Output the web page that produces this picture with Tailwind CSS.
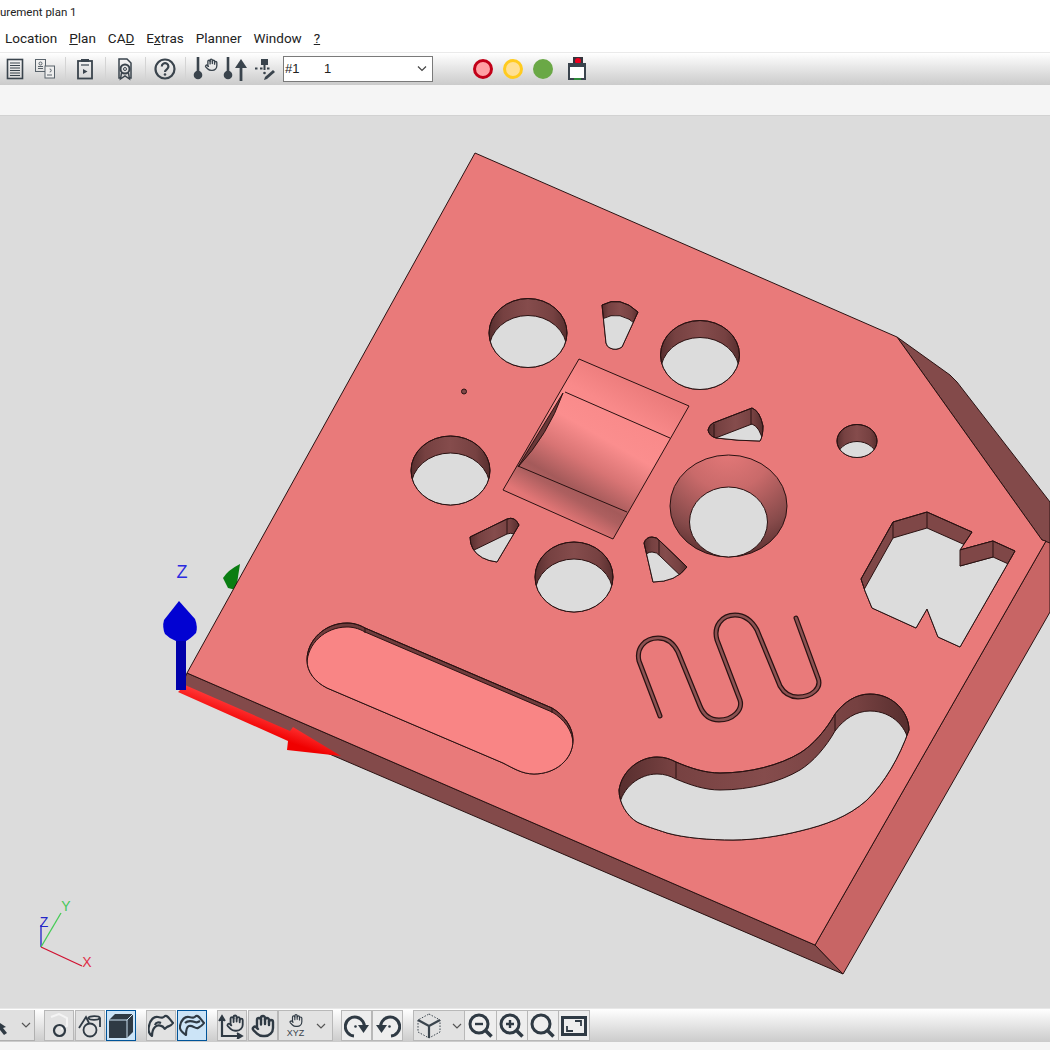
<!doctype html>
<html>
<head>
<meta charset="utf-8">
<script src="https://cdn.jsdelivr.net/npm/@tailwindcss/browser@4"></script>
</head>
<body class="bg-white overflow-hidden">
<div class="w-[1050px] h-[1050px] flex flex-col font-['Roboto',sans-serif] text-[#222] overflow-hidden">

  <!-- title -->
  <div class="h-[25px] shrink-0 bg-white whitespace-nowrap text-[11.5px] leading-[24px]">urement plan 1</div>

  <!-- menu -->
  <div class="h-[28px] shrink-0 bg-white border-b border-[#eaeaea] flex items-center gap-3 pl-[5px] text-[13.5px]">
    <span>Location</span>
    <span><u>P</u>lan</span>
    <span>CA<u>D</u></span>
    <span>E<u>x</u>tras</span>
    <span>Planner</span>
    <span>Window</span>
    <span><u>?</u></span>
  </div>

  <!-- main toolbar -->
  <div class="h-[32px] shrink-0 bg-gradient-to-b from-white to-[#cbcbcb] flex items-center">
    <div class="w-[30px] h-[32px] flex items-center justify-center">
      <svg width="18" height="22" viewBox="0 0 18 22" fill="none" stroke="#3a444d"><rect x="1.5" y="1.5" width="15" height="19" stroke-width="1.6"/><path d="M4 5h10M4 7.5h10M4 10h10M4 12.500h10M4 15h10M4 17.500h10" stroke-width="1.200"/></svg>
    </div>
    <div class="w-[30px] h-[32px] flex items-center justify-center">
      <svg width="22" height="22" viewBox="0 0 22 22" fill="none" stroke="#59636b"><rect x="1.500" y="1.500" width="10" height="12"/><rect x="11" y="8" width="9.500" height="12" fill="#eee"/><circle cx="6.500" cy="5.500" r="1.500"/><path d="M4 10.500h5M4 8.500h5M15.700 11a1.500 1.500 0 1 1 0 3M13 17h5"/></svg>
    </div>
    <div class="w-[10px] h-[24px] flex justify-center"><div class="w-px h-full bg-[#d4d4d4]"></div></div>
    <div class="w-[30px] h-[32px] flex items-center justify-center">
      <svg width="18" height="22" viewBox="0 0 18 22" fill="none" stroke="#3a444d"><rect x="2" y="3" width="14" height="17.500" stroke-width="1.800"/><rect x="5" y="1" width="8" height="3" fill="#3a444d" stroke="none"/><path d="M5 7h8" stroke-width="1.200"/><path d="M7 11l4.500 2.500L7 16z" fill="#3a444d" stroke="none"/></svg>
    </div>
    <div class="w-[10px] h-[24px] flex justify-center"><div class="w-px h-full bg-[#d4d4d4]"></div></div>
    <div class="w-[30px] h-[32px] flex items-center justify-center">
      <svg width="18" height="24" viewBox="0 0 18 24" fill="none" stroke="#3a444d"><path d="M5 21H3V2h8l4 4v15h-2" stroke-width="1.500"/><circle cx="9" cy="12" r="4.500" stroke-width="2"/><circle cx="9" cy="12" r="1.500" stroke-width="1"/><path d="M5.500 16l-1 6 4.500-3 4.500 3-1-6" stroke-width="1.500"/></svg>
    </div>
    <div class="w-[10px] h-[24px] flex justify-center"><div class="w-px h-full bg-[#d4d4d4]"></div></div>
    <div class="w-[30px] h-[32px] flex items-center justify-center">
      <svg width="22" height="22" viewBox="0 0 22 22" fill="none" stroke="#3a444d"><circle cx="11" cy="11" r="9.500" stroke-width="2.200"/><path d="M7.800 8.500a3.300 3.300 0 1 1 5.200 2.700c-1.300 1-2 1.300-2 2.800" stroke-width="2.200"/><circle cx="11" cy="16.500" r="1.300" fill="#3a444d" stroke="none"/></svg>
    </div>
    <div class="w-[10px] h-[24px] flex justify-center"><div class="w-px h-full bg-[#d4d4d4]"></div></div>
    <div class="w-[30px] h-[32px] flex items-center justify-center">
      <svg width="26" height="24" viewBox="0 0 26 24" fill="none" stroke="#3a444d"><path d="M6 0v17" stroke-width="2.600"/><circle cx="6" cy="18" r="4.300" fill="#3a444d" stroke="none"/><g transform="translate(12.500 1) scale(.56)" stroke-width="2.400" stroke-linecap="round" stroke-linejoin="round"><path d="M18 11V6a2 2 0 0 0-2-2a2 2 0 0 0-2 2"/><path d="M14 10V4a2 2 0 0 0-2-2a2 2 0 0 0-2 2v2"/><path d="M10 10.500V6a2 2 0 0 0-2-2a2 2 0 0 0-2 2v8"/><path d="M18 8a2 2 0 1 1 4 0v6a8 8 0 0 1-8 8h-2c-2.800 0-4.500-.86-5.990-2.340l-3.600-3.600a2 2 0 0 1 2.830-2.820L7 15"/></g></svg>
    </div>
    <div class="w-[30px] h-[32px] flex items-center justify-center">
      <svg width="26" height="26" viewBox="0 0 26 26" fill="none" stroke="#3a444d"><path d="M6 1v17" stroke-width="2.600"/><circle cx="6" cy="19" r="4.300" fill="#3a444d" stroke="none"/><path d="M19 11v14" stroke-width="2.800"/><path d="M19 3l6 9H13z" fill="#3a444d" stroke="none"/></svg>
    </div>
    <div class="w-[30px] h-[32px] flex items-center justify-center">
      <svg width="22" height="22" viewBox="0 0 22 22" fill="#3a444d" stroke="none"><rect x="7" y="1" width="7" height="6"/><rect x="9.500" y="7" width="2" height="5"/><rect x="1" y="9.500" width="2.500" height="2"/><rect x="6" y="9.500" width="2.500" height="2"/><rect x="13" y="9.500" width="2.500" height="2"/><circle cx="10.500" cy="15" r="1.300"/><path d="M11 19l8-7 2 2-8 7-3 1z"/></svg>
    </div>
    <div class="ml-[3px] w-[150px] h-[26px] border border-[#7a7a7a] bg-white flex items-center text-[13px] relative">
      <span class="w-[40px] pl-[1px] font-['Liberation_Sans',sans-serif]">#1</span>
      <span class="font-['Liberation_Sans',sans-serif]">1</span>
      <svg class="ml-auto mr-[3px]" width="14" height="10" viewBox="0 0 14 10" fill="none" stroke="#444" stroke-width="1.200"><path d="M3 2.500l4 4 4-4"/></svg>
    </div>
    <div class="ml-[35px] w-[30px] h-[32px] flex items-center justify-center">
      <div class="w-[20px] h-[20px] rounded-full bg-[#ffa0a4] border-[3px] border-[#c20018]"></div>
    </div>
    <div class="w-[30px] h-[32px] flex items-center justify-center">
      <div class="w-[20px] h-[20px] rounded-full bg-[#ffe094] border-[3px] border-[#ffcb1f]"></div>
    </div>
    <div class="w-[30px] h-[32px] flex items-center justify-center">
      <div class="w-[20px] h-[20px] rounded-full bg-[#6aa846]"></div>
    </div>
    <div class="ml-[4px] w-[30px] h-[32px] flex items-center justify-center">
      <svg width="18" height="24" viewBox="0 0 18 24"><rect x="5" y="0" width="10" height="8" fill="#33333b"/><circle cx="10" cy="4" r="3" fill="#f00020"/><rect x="1" y="7" width="16" height="15" fill="#fff" stroke="#3a444d" stroke-width="2"/><rect x="1" y="7" width="16" height="3" fill="#3a444d"/><rect x="6" y="21" width="7" height="2" fill="#2e8b3a"/></svg>
    </div>
  </div>

  <!-- band -->
  <div class="h-[31px] shrink-0 bg-[#f5f5f5] border-b border-[#d2d2d2]"></div>

  <!-- 3D viewport -->
  <div class="h-[892px] shrink-0 bg-[#dcdcdc]">
    <svg class="block" width="1050" height="892" viewBox="0 116 1050 892" font-family="Liberation Sans, sans-serif">
      <defs>
        <linearGradient id="wall" x1="0" x2="1" y1="0" y2="0">
          <stop offset="0" stop-color="#572e2e"/><stop offset=".18" stop-color="#764141"/><stop offset=".5" stop-color="#854c4c"/><stop offset=".82" stop-color="#764141"/><stop offset="1" stop-color="#572e2e"/>
        </linearGradient>
        <radialGradient id="cone" gradientUnits="userSpaceOnUse" cx="728" cy="445" r="112">
          <stop offset="0" stop-color="#e87a7a"/><stop offset=".4" stop-color="#c96a6a"/><stop offset=".8" stop-color="#864a4a"/><stop offset="1" stop-color="#5e3232"/>
        </radialGradient>
        <linearGradient id="ramp" gradientUnits="userSpaceOnUse" x1="634" y1="382" x2="558" y2="514">
          <stop offset="0" stop-color="#ec7c7c"/><stop offset=".22" stop-color="#f98a8a"/><stop offset=".42" stop-color="#fb8e8e"/><stop offset=".62" stop-color="#d87474"/><stop offset=".8" stop-color="#a45a5a"/><stop offset=".86" stop-color="#ad5f5f"/><stop offset="1" stop-color="#e27676"/>
        </linearGradient>
        <linearGradient id="redaxis" gradientUnits="userSpaceOnUse" x1="238" y1="705" x2="232" y2="722">
          <stop offset="0" stop-color="#ff3535"/><stop offset="1" stop-color="#f00000"/>
        </linearGradient>
        <ellipse id="h1" cx="528" cy="333" rx="39" ry="34.500"/>
        <ellipse id="h2" cx="700" cy="355" rx="39.500" ry="34.500"/>
        <ellipse id="h3" cx="450.500" cy="470.500" rx="39.500" ry="34.500"/>
        <ellipse id="h4" cx="574" cy="577" rx="39" ry="35"/>
        <ellipse id="h5" cx="857" cy="441" rx="20" ry="16.500"/>
        <path id="w1" d="M602 305 Q620 295 638 312 L622 347 Q616 351 610 348 Q607 347 606 343 Z"/>
        <path id="w2" d="M708 430 Q709 425 713 423 L752 408 Q760 411 763 426 Q763 436 760 441 Q740 441 716 438 Q709 436 708 430 Z"/>
        <path id="w3" d="M470 537 L507 519 Q515 516 519 525 L497 562 Q480 560 473 549 Q470 544 470 537 Z"/>
        <path id="w4" d="M644 543 Q646 537 652 537 Q657 537 660 541 L687 567 Q676 582 653 582 Z"/>
        <path id="poly" d="M893 522 L927 512 L972 532 L960 550 L993 541 L1015 551 L960 647 L938 637 L927 609 L916 628 L872 608 L865 591 L861 579 Z"/>
        <path id="cres" d="M619 790 C622 770 640 757 657 757 C665 757 670 759 676 762 C690 768 705 773 720 773 C750 773 780 765 800 753 C813 745 826 730 835 714 C844 702 856 694 870 694 C893 694 909 712 909 730 C899 758 885 782 867 800 C848 817 825 825 800 831 C780 836 755 840 733 840 C710 840 685 838 667 833 C655 829 645 826 637 822 C627 816 619 803 619 790 Z"/>
        <path id="slot" d="M365 628 C358 624 352 623 347 623 C325 623 307 640 307 660 C307 672 315 682 327 688 L503 763 C513 768 522 774 534 774 C555 774 573 760 573 740 C573 727 564 715 552 708 Z"/>
        <clipPath id="ch1"><use href="#h1"/></clipPath>
        <clipPath id="ch2"><use href="#h2"/></clipPath>
        <clipPath id="ch3"><use href="#h3"/></clipPath>
        <clipPath id="ch4"><use href="#h4"/></clipPath>
        <clipPath id="ch5"><use href="#h5"/></clipPath>
        <clipPath id="cw1"><use href="#w1"/></clipPath>
        <clipPath id="cw2"><use href="#w2"/></clipPath>
        <clipPath id="cw3"><use href="#w3"/></clipPath>
        <clipPath id="cw4"><use href="#w4"/></clipPath>
        <clipPath id="cpoly"><use href="#poly"/></clipPath>
        <clipPath id="ccres"><use href="#cres"/></clipPath>
        <clipPath id="cslot"><use href="#slot"/></clipPath>
      </defs>

      <!-- green axis behind part -->
      <path d="M223 578 Q228 570 240 564 L236 590 L228 588 Z" fill="#0a7d12"/>

      <!-- solid faces -->
      <polygon points="187,673 815,945 843,974 180,690" fill="#834a4a" stroke="#2a1212"/>
      <polygon points="815,945 1046,541 1050,541 1050,612 843,974" fill="#c86565" stroke="#2a1212"/>
      <polygon points="897,337 950,375 957,382 1050,502 1050,543 1042,540" fill="#834a4a" stroke="#2a1212"/>
      <polygon points="475,153 897,337 1042,540 1046,541 815,945 187,673" fill="#e97a7a" stroke="#2a1212"/>

      <!-- axes -->
      <path d="M178 692 L185 685 L290 731 L293 727 L341 756 L287 750 L288 741 Z" fill="url(#redaxis)"/>
      <rect x="176" y="632" width="10" height="58" fill="#0000aa"/>
      <path d="M179 601 L195 619 Q198 627 196 633 Q190 639 186 641 L176 641 Q170 639 165 634 Q162 627 164 620 Z" fill="#0202d2"/>
      <text x="182" y="578" font-size="18" fill="#2b2be0" text-anchor="middle">Z</text>

      <g stroke="#2a1212" stroke-width="1">
        <!-- through holes -->
        <use href="#h1" fill="url(#wall)"/><g clip-path="url(#ch1)"><use href="#h1" y="17" fill="#dcdcdc"/></g><use href="#h1" fill="none"/>
        <use href="#h2" fill="url(#wall)"/><g clip-path="url(#ch2)"><use href="#h2" y="17" fill="#dcdcdc"/></g><use href="#h2" fill="none"/>
        <use href="#h3" fill="url(#wall)"/><g clip-path="url(#ch3)"><use href="#h3" y="17" fill="#dcdcdc"/></g><use href="#h3" fill="none"/>
        <use href="#h4" fill="url(#wall)"/><g clip-path="url(#ch4)"><use href="#h4" y="17" fill="#dcdcdc"/></g><use href="#h4" fill="none"/>
        <use href="#h5" fill="url(#wall)"/><g clip-path="url(#ch5)"><use href="#h5" y="17" fill="#dcdcdc"/></g><use href="#h5" fill="none"/>

        <!-- countersunk hole -->
        <ellipse cx="728.500" cy="506" rx="58.500" ry="51" fill="url(#cone)"/>
        <ellipse cx="728.500" cy="522" rx="39" ry="35" fill="#dcdcdc"/>

        <!-- wedges -->
        <use href="#w1" fill="url(#wall)"/><g clip-path="url(#cw1)"><use href="#w1" y="14" fill="#dcdcdc"/></g><use href="#w1" fill="none"/>
        <use href="#w2" fill="url(#wall)"/><g clip-path="url(#cw2)"><use href="#w2" y="16" fill="#dcdcdc"/></g><use href="#w2" fill="none"/>
        <path d="M714 424V437M751 409V425" fill="none"/>
        <use href="#w3" fill="url(#wall)"/><g clip-path="url(#cw3)"><use href="#w3" y="15" fill="#dcdcdc"/></g><use href="#w3" fill="none"/>
        <path d="M507 519V534" fill="none"/>
        <use href="#w4" fill="url(#wall)"/><g clip-path="url(#cw4)"><use href="#w4" y="15" fill="#dcdcdc"/></g><use href="#w4" fill="none"/>
        <path d="M659 540V555" fill="none"/>

        <!-- ramp -->
        <polygon points="579,359 689,406 613,539 503,490" fill="url(#ramp)"/>
        <path d="M565 392 L670 438 M518 466 L627 512" fill="none"/>
        <path d="M563 393 Q548 435 518 467 Z" fill="#6a3838"/>

        <!-- polygon pocket -->
        <use href="#poly" fill="#7f4747"/><g clip-path="url(#cpoly)"><use href="#poly" y="16" fill="#dcdcdc"/></g><use href="#poly" fill="none"/>
        <polygon points="960,550 993,541 993,557 960,566" fill="#7f4747"/>
        <path d="M893 522V538M927 512V528" fill="none"/>

        <!-- crescent -->
        <use href="#cres" fill="url(#wall)"/><g clip-path="url(#ccres)"><use href="#cres" y="17" fill="#dcdcdc"/></g><use href="#cres" fill="none"/>
        <path d="M676 762V778M835 714V731" fill="none"/>

        <!-- slot -->
        <use href="#slot" fill="#6f3c3c"/><g clip-path="url(#cslot)"><use href="#slot" y="4" fill="#f98585"/></g><use href="#slot" fill="none"/>
        <path d="M365 628V633M552 708V713" fill="none"/>
      </g>

      <!-- serpentine -->
      <path d="M660 716 L639 661 C636 648 645 638 658 638 C668 638 674 644 678 652 L700 706 C704 716 711 720 719 720 C733 720 743 710 740 700 L717 640 C713 626 722 615 735 615 C745 615 752 621 757 630 L780 686 C784 693 790 697 798 697 C812 697 822 688 818 678 L796 618" fill="none" stroke="#2a1212" stroke-width="5" stroke-linecap="round"/>
      <path d="M660 716 L639 661 C636 648 645 638 658 638 C668 638 674 644 678 652 L700 706 C704 716 711 720 719 720 C733 720 743 710 740 700 L717 640 C713 626 722 615 735 615 C745 615 752 621 757 630 L780 686 C784 693 790 697 798 697 C812 697 822 688 818 678 L796 618" fill="none" stroke="#8c5252" stroke-width="2.500" stroke-linecap="round"/>

      <!-- tiny mark -->
      <circle cx="464" cy="391.500" r="2.500" fill="#7f4747" stroke="#2a1212"/>

      <!-- orientation triad -->
      <path d="M41 947V925" stroke="#2020c8" stroke-width="1.300"/>
      <path d="M41 947L61 913" stroke="#44cc55" stroke-width="1.300"/>
      <path d="M41 947L82 966" stroke="#d01030" stroke-width="1.300"/>
      <text x="44" y="927" font-size="14" fill="#2424c8" text-anchor="middle">Z</text>
      <text x="66" y="911" font-size="14" fill="#45c85a" text-anchor="middle">Y</text>
      <text x="87" y="967" font-size="14" fill="#e03048" text-anchor="middle">X</text>
    </svg>
  </div>

  <!-- bottom toolbar -->
  <div class="h-[34px] shrink-0 bg-gradient-to-b from-white to-[#cbcbcb] border-t border-[#e8e8e8] flex items-center">
    <div class="w-[35px] h-[31px] bg-[#e0e0e0] border-r border-b border-[#b0b0b0] flex items-center overflow-hidden">
      <svg width="10" height="16" viewBox="0 0 10 16" class="mt-[4px]"><path d="M-6 0L6 8 3 9 7 14 4 16 0 11-3 13Z" fill="#2f3a44"/></svg>
      <svg class="ml-[10px]" width="12" height="8" viewBox="0 0 12 8" fill="none" stroke="#555" stroke-width="1.200"><path d="M2 2l4 4 4-4"/></svg>
    </div>
    <div class="ml-[9px] w-[30px] h-[31px] bg-[#e2e2e2] border border-[#b8b8b8] flex items-center justify-center">
      <svg width="24" height="26" viewBox="0 0 24 26" fill="none"><path d="M4 4l8-3 8 4v8l-6 3" stroke="#f4f4f4" stroke-width="2"/><circle cx="12.500" cy="17.500" r="5.500" stroke="#2f3a44" stroke-width="2.200"/></svg>
    </div>
    <div class="ml-[1px] w-[30px] h-[31px] bg-[#e2e2e2] border border-[#b8b8b8] flex items-center justify-center">
      <svg width="24" height="24" viewBox="0 0 24 24" fill="none" stroke="#2f3a44" stroke-width="1.800"><path d="M1 14L8 3l3 6"/><path d="M10 4c2-2.500 11-2.500 12 0v9"/><path d="M10 4c2 2.500 10 2.500 12 0"/><circle cx="12" cy="16" r="6.500"/></svg>
    </div>
    <div class="ml-[1px] w-[30px] h-[31px] bg-[#cce4f7] border border-[#005499] flex items-center justify-center">
      <svg width="26" height="26" viewBox="0 0 26 26"><path d="M1 7l6-6h18v18l-6 6H1z" fill="#2f3a44"/><path d="M1 7h18l6-6M19 7v18" stroke="#cfe3f3" stroke-width="1" fill="none"/></svg>
    </div>
    <div class="w-[10px] h-[31px]"></div>
    <div class="w-[30px] h-[31px] bg-[#e2e2e2] border border-[#b8b8b8] flex items-center justify-center">
      <svg width="26" height="24" viewBox="0 0 26 24" fill="none" stroke="#2f3a44" stroke-width="2.200" stroke-linejoin="round"><path d="M1 12C2 6 6 2 10 3s5 1 7-1c2-1 4 2 8 7-2 3-4 3-6 4s-2 3-3 1-6-4-9-1-3 7-3 9c-3-2-4-6-3-10z"/><path d="M7 11c1-3 4-3 6-2"/></svg>
    </div>
    <div class="ml-[1px] w-[30px] h-[31px] bg-[#cce4f7] border border-[#005499] flex items-center justify-center">
      <svg width="26" height="24" viewBox="0 0 26 24" fill="none" stroke="#2f3a44" stroke-width="2.200" stroke-linejoin="round"><path d="M1 12C2 6 6 2 10 3s5 1 7-1c2-1 4 2 8 7-2 3-4 4-6 5-3 1-5-3-9-2-3 1-3 7-3 9-3-2-7-5-6-9z"/><path d="M6 9c3-3 7-2 10-1 2 1 3 0 5-1"/></svg>
    </div>
    <div class="w-[10px] h-[31px]"></div>
    <div class="w-[30px] h-[31px] bg-[#e2e2e2] border border-[#b8b8b8] flex items-center justify-center">
      <svg width="28" height="26" viewBox="0 0 28 26" fill="none" stroke="#2f3a44"><path d="M4 5v18h18" stroke-width="2.200"/><path d="M1 8l3-5 3 5M19 20l5 3-5 3" stroke-width="1.800" fill="#2f3a44"/><g transform="translate(8 1) scale(.76)" stroke-width="2.400" stroke-linecap="round" stroke-linejoin="round"><path d="M18 11V6a2 2 0 0 0-2-2a2 2 0 0 0-2 2"/><path d="M14 10V4a2 2 0 0 0-2-2a2 2 0 0 0-2 2v2"/><path d="M10 10.500V6a2 2 0 0 0-2-2a2 2 0 0 0-2 2v8"/><path d="M18 8a2 2 0 1 1 4 0v6a8 8 0 0 1-8 8h-2c-2.800 0-4.500-.86-5.990-2.340l-3.600-3.600a2 2 0 0 1 2.830-2.820L7 15"/></g></svg>
    </div>
    <div class="ml-[1px] w-[30px] h-[31px] bg-[#e2e2e2] border border-[#b8b8b8] flex items-center justify-center">
      <svg width="24" height="24" viewBox="0 0 24 24" fill="none" stroke="#2f3a44" stroke-width="2.400" stroke-linecap="round" stroke-linejoin="round"><path d="M18 11V6a2 2 0 0 0-2-2a2 2 0 0 0-2 2"/><path d="M14 10V4a2 2 0 0 0-2-2a2 2 0 0 0-2 2v2"/><path d="M10 10.500V6a2 2 0 0 0-2-2a2 2 0 0 0-2 2v8"/><path d="M18 8a2 2 0 1 1 4 0v6a8 8 0 0 1-8 8h-2c-2.800 0-4.500-.86-5.990-2.340l-3.600-3.600a2 2 0 0 1 2.830-2.820L7 15"/></svg>
    </div>
    <div class="w-[55px] h-[31px] bg-[#e2e2e2] border border-[#b8b8b8] flex items-center">
      <div class="w-[33px] flex flex-col items-center">
        <svg width="14" height="15" viewBox="0 0 24 24" fill="none" stroke="#2f3a44" stroke-width="2" stroke-linecap="round" stroke-linejoin="round"><path d="M18 11V6a2 2 0 0 0-2-2a2 2 0 0 0-2 2"/><path d="M14 10V4a2 2 0 0 0-2-2a2 2 0 0 0-2 2v2"/><path d="M10 10.500V6a2 2 0 0 0-2-2a2 2 0 0 0-2 2v8"/><path d="M18 8a2 2 0 1 1 4 0v6a8 8 0 0 1-8 8h-2c-2.800 0-4.500-.86-5.990-2.340l-3.600-3.600a2 2 0 0 1 2.830-2.820L7 15"/></svg>
        <span class="text-[9px] leading-[10px] text-[#3a444d] font-['Liberation_Sans',sans-serif]">XYZ</span>
      </div>
      <svg class="ml-[3px]" width="12" height="8" viewBox="0 0 12 8" fill="none" stroke="#555" stroke-width="1.200"><path d="M2 2l4 4 4-4"/></svg>
    </div>
    <div class="ml-[8px] w-[31px] h-[31px] bg-[#eeeeee] border border-[#b8b8b8] flex items-center justify-center">
      <svg width="26" height="24" viewBox="0 0 26 24" fill="none" stroke="#2f3a44" stroke-width="3"><path d="M20 15A9.500 9.500 0 1 0 10 22"/><path d="M14 11h11l-5.500 8z" fill="#2f3a44" stroke="none"/><circle cx="11.500" cy="12.500" r="1.300" fill="#2f3a44" stroke="none"/></svg>
    </div>
    <div class="w-[31px] h-[31px] bg-[#eeeeee] border border-[#b8b8b8] flex items-center justify-center">
      <svg width="26" height="24" viewBox="0 0 26 24" fill="none" stroke="#2f3a44" stroke-width="3"><path d="M6 15A9.500 9.500 0 1 1 16 22"/><path d="M12 11H1l5.500 8z" fill="#2f3a44" stroke="none"/><circle cx="14.500" cy="12.500" r="1.300" fill="#2f3a44" stroke="none"/></svg>
    </div>
    <div class="ml-[10px] w-[52px] h-[31px] bg-[#e2e2e2] border border-[#b8b8b8] flex items-center">
      <svg class="ml-[2px]" width="26" height="26" viewBox="0 0 26 26" fill="none" stroke="#3a444d"><path d="M13 1L24 7v12L13 25 2 19V7z" stroke-dasharray="1.500 1.500"/><path d="M2 7l11 6 11-6M13 13v12" stroke-width="2.200"/></svg>
      <svg class="ml-[9px]" width="12" height="8" viewBox="0 0 12 8" fill="none" stroke="#555" stroke-width="1.200"><path d="M2 2l4 4 4-4"/></svg>
    </div>
    <div class="w-[32px] h-[31px] bg-[#eeeeee] border-y border-r border-[#b8b8b8] flex items-center justify-center">
      <svg width="26" height="26" viewBox="0 0 26 26" fill="none" stroke="#2f3a44"><circle cx="11" cy="11" r="9" stroke-width="3"/><path d="M17.500 17.500l6 6" stroke-width="3.500"/><path d="M7 11h8" stroke-width="2.400"/></svg>
    </div>
    <div class="w-[31px] h-[31px] bg-[#eeeeee] border-y border-r border-[#b8b8b8] flex items-center justify-center">
      <svg width="26" height="26" viewBox="0 0 26 26" fill="none" stroke="#2f3a44"><circle cx="11" cy="11" r="9" stroke-width="3"/><path d="M17.500 17.500l6 6" stroke-width="3.500"/><path d="M7 11h8M11 7v8" stroke-width="2.400"/></svg>
    </div>
    <div class="w-[31px] h-[31px] bg-[#eeeeee] border-y border-r border-[#b8b8b8] flex items-center justify-center">
      <svg width="26" height="26" viewBox="0 0 26 26" fill="none" stroke="#2f3a44"><circle cx="11" cy="11" r="9" stroke-width="3"/><path d="M17.500 17.500l6 6" stroke-width="3.500"/></svg>
    </div>
    <div class="w-[31px] h-[31px] bg-[#eeeeee] border-y border-r border-[#b8b8b8] flex items-center justify-center">
      <svg width="26" height="20" viewBox="0 0 26 20" fill="none" stroke="#2f3a44"><rect x="1.500" y="1.500" width="23" height="17" stroke-width="3"/><path d="M6 10v5h6M14 5h6v5" stroke-width="1.800"/></svg>
    </div>
  </div>

  <!-- bottom strip -->
  <div class="flex-1 bg-[#f5f5f5]"></div>
</div>
</body>
</html>
